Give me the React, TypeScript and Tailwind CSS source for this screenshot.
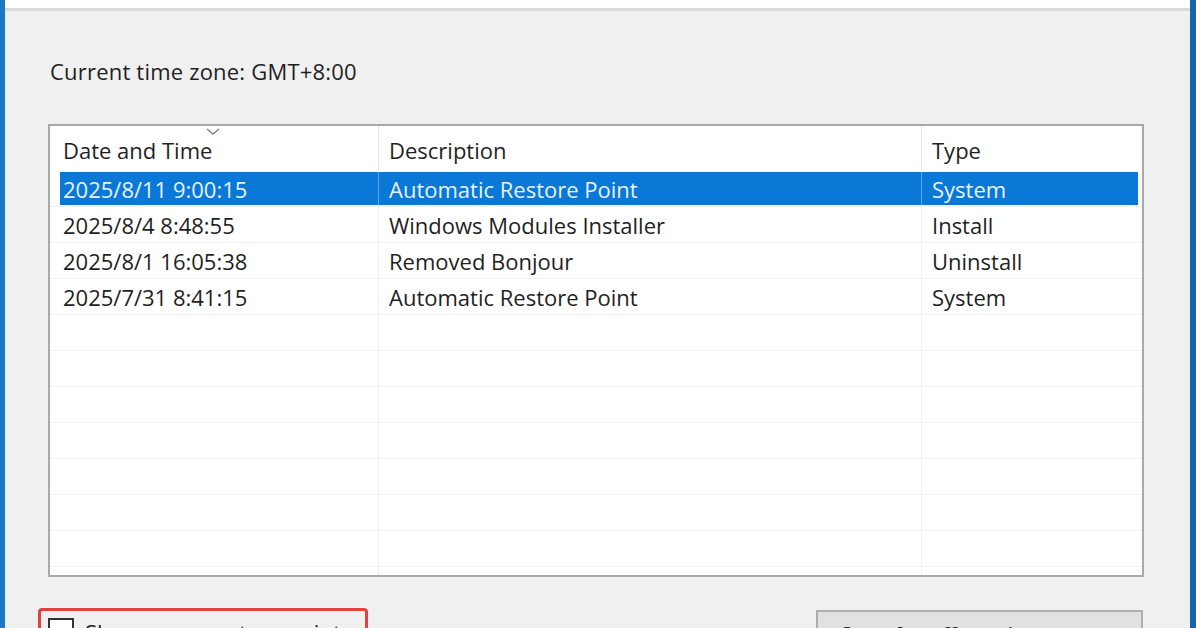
import React from 'react';

type Point = { date: string; desc: string; type: string };

const points: Point[] = [
  { date: '2025/8/11 9:00:15', desc: 'Automatic Restore Point', type: 'System' },
  { date: '2025/8/4 8:48:55', desc: 'Windows Modules Installer', type: 'Install' },
  { date: '2025/8/1 16:05:38', desc: 'Removed Bonjour', type: 'Uninstall' },
  { date: '2025/7/31 8:41:15', desc: 'Automatic Restore Point', type: 'System' },
];

const Row: React.FC<{ p?: Point; selected?: boolean }> = ({ p, selected }) => (
  <div className="flex h-[36px] shrink-0 border-b border-[#f0f0f0]">
    <div className="w-[10px] shrink-0" />
    <div
      className={`flex flex-1 mr-[4px] ${
        selected ? 'bg-[#0a78d7] text-[#e6f2fd] my-[1px]' : ''
      }`}
    >
      <div className="w-[318px] shrink-0 pl-[3px] flex items-center whitespace-nowrap">{p?.date}</div>
      <div
        className={`w-[543px] shrink-0 pl-[10px] flex items-center whitespace-nowrap border-l ${
          selected ? 'border-[#5aa6ea]' : 'border-[#efefef]'
        }`}
      >
        {p?.desc}
      </div>
      <div
        className={`flex-1 pl-[10px] flex items-center whitespace-nowrap border-l ${
          selected ? 'border-[#5aa6ea]' : 'border-[#efefef]'
        }`}
      >
        {p?.type}
      </div>
    </div>
  </div>
);

export default function App() {
  const empty = Array.from({ length: 8 });
  return (
    <div className="w-[1196px] h-[628px] overflow-hidden flex bg-[#f0f0f0] text-[22px] leading-[30px] text-[#1f1f1f] font-['Open_Sans','Noto_Sans',sans-serif]">
      <div className="w-[5px] shrink-0 bg-[#1a78c6]" />

      <div className="flex-1 flex flex-col min-w-0">
        <div className="h-[8px] shrink-0 bg-white" />
        <div className="h-[3px] shrink-0 bg-[#d9d9d9]" />

        <div className="mt-[45px] pl-[45px] tracking-[0.2px]">Current time zone: GMT+8:00</div>

        {/* restore point list */}
        <div className="mt-[38px] ml-[43px] w-[1096px] h-[453px] shrink-0 border-2 border-[#a9a9a9] bg-white flex flex-col overflow-hidden">
          <div className="relative flex h-[45px] shrink-0">
            <div className="w-[10px] shrink-0" />
            <div className="w-[318px] shrink-0 pl-[3px] pt-[9px]">Date and Time</div>
            <div className="w-[543px] shrink-0 pl-[10px] pt-[9px] border-l border-[#e6e6e6]">Description</div>
            <div className="flex-1 pl-[10px] pt-[9px] border-l border-[#e6e6e6]">Type</div>
            <svg className="absolute left-[156px] top-[2px]" width="14" height="8" viewBox="0 0 14 8">
              <polyline points="1,1 7,6 13,1" fill="none" stroke="#808080" strokeWidth="1.5" />
            </svg>
          </div>
          {points.map((p, i) => (
            <Row key={i} p={p} selected={i === 0} />
          ))}
          {empty.map((_, i) => (
            <Row key={`e${i}`} />
          ))}
        </div>

        <div className="flex items-start justify-between mt-[31px] pl-[33px] pr-[47px]">
          <div className="w-[330px] h-[48px] shrink-0 border-[3px] border-[#e0433f] rounded-[4px] flex items-start pl-[7px] pt-[6px]">
            <div className="w-[26px] h-[26px] mt-[1px] shrink-0 border-2 border-[#333] bg-white" />
            <span className="ml-[11px] whitespace-nowrap">Show more restore points</span>
          </div>
          <div className="mt-[2px] w-[327px] h-[48px] shrink-0 border-2 border-[#adadad] bg-[#e1e1e1] flex justify-center pt-[7px] whitespace-nowrap">
            Scan for affected programs
          </div>
        </div>
      </div>

      <div className="w-[6px] shrink-0 bg-[#1466b2]" />
    </div>
  );
}
